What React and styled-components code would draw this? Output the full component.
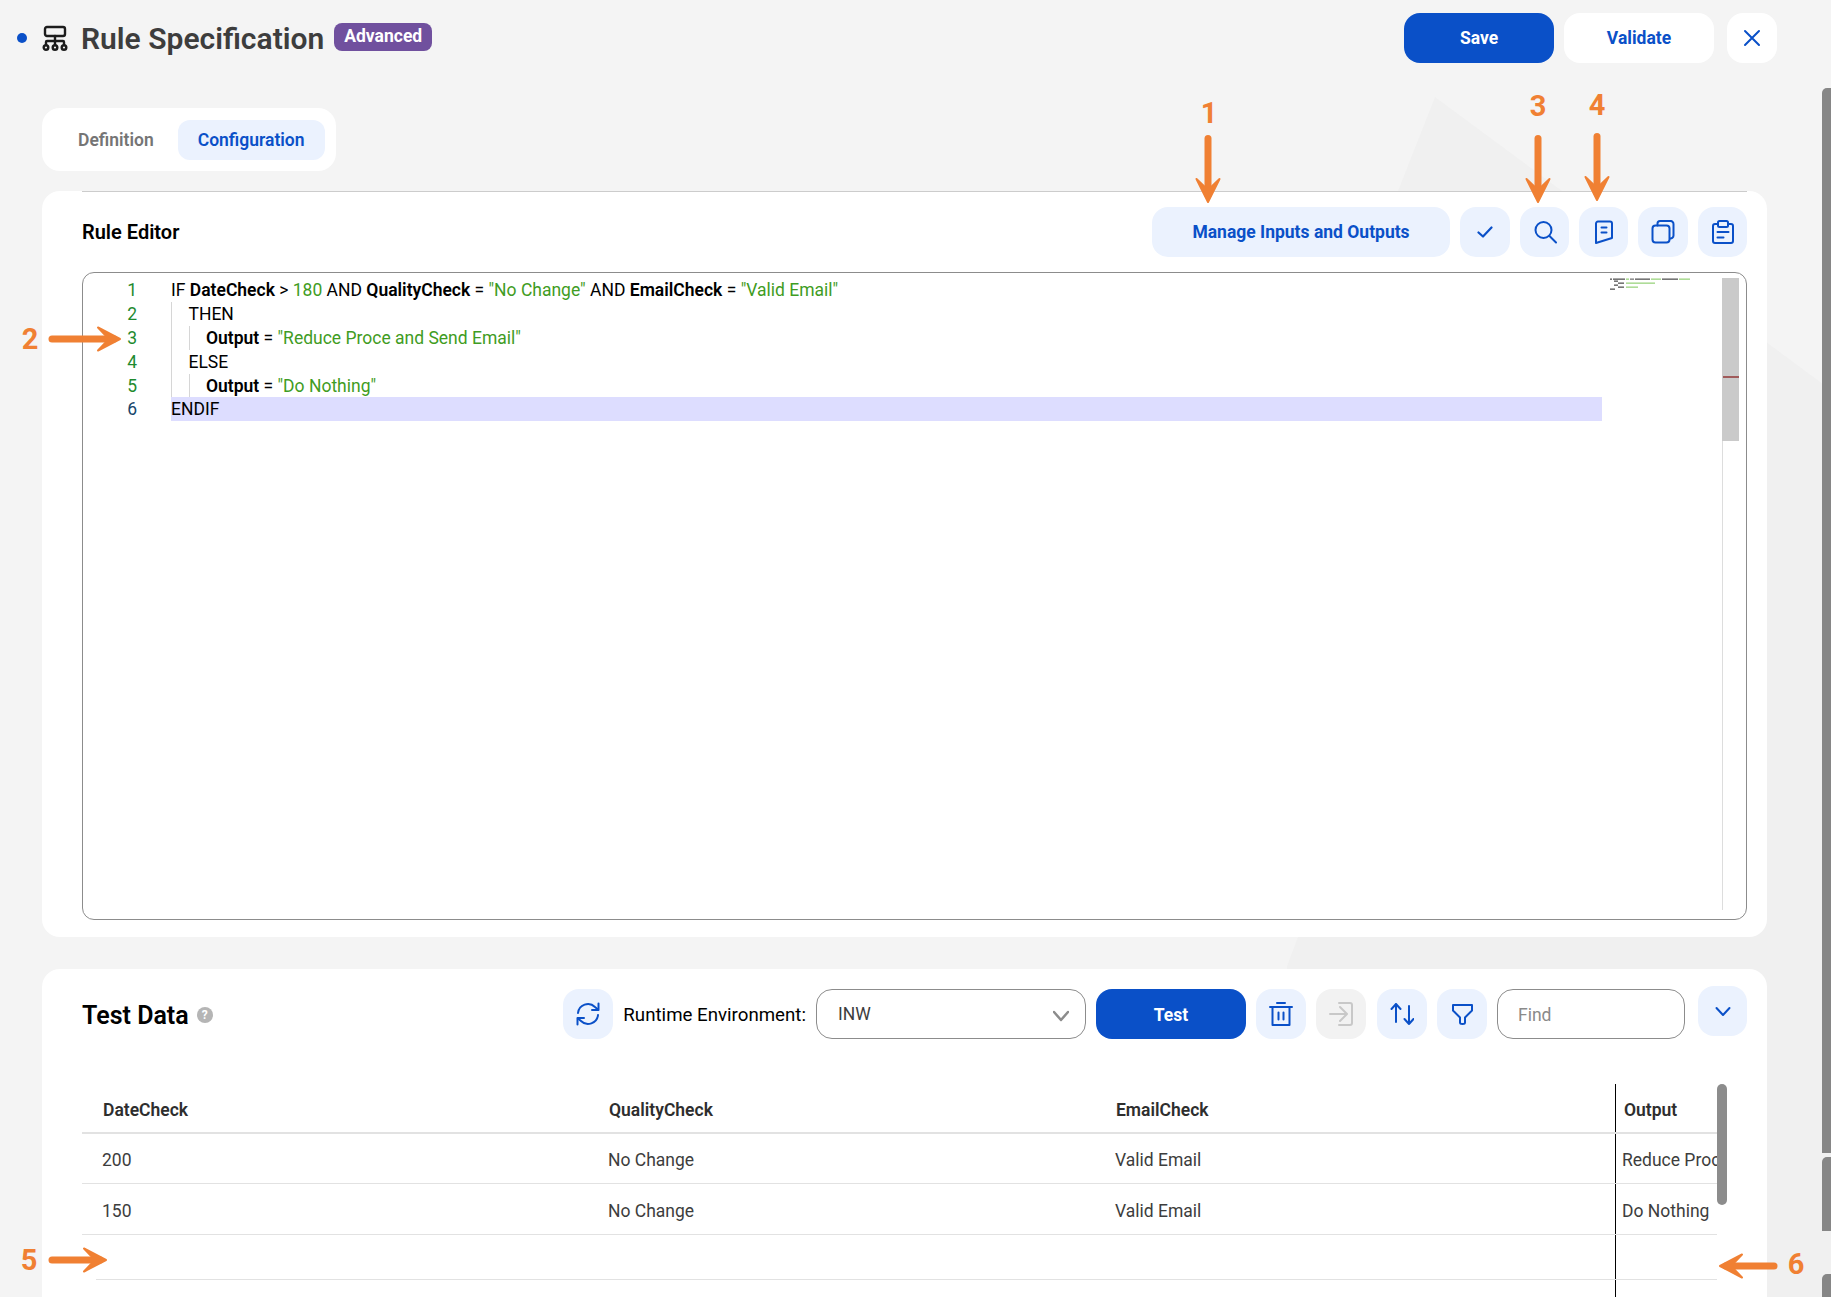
import React from 'react';
import styled, { createGlobalStyle } from 'styled-components';

const BLUE = '#0a50c8';
const PALE = '#ebf2fe';
const ORANGE = '#f08033';

const GlobalStyle = createGlobalStyle`
    html, body {
        margin: 0;
        height: 100%;
        overflow: hidden;
        background: #f4f4f4;
        font-family: Roboto, "Liberation Sans", sans-serif;
    }

    * {
        box-sizing: border-box;
    }
`;

const Page = styled.div`
    position: relative;
    width: 1831px;
    height: 1297px;
    overflow: hidden;
    background: #f4f4f4;
`;

const BackShape = styled.div`
    position: absolute;
    inset: 0;
    background: #f0f0f0;
    clip-path: polygon(1435px 97px, 1831px 390px, 1831px 1297px, 1287px 1297px, 1287px 966px, 1298px 937px, 1398px 191px);
`;

const Content = styled.div`
    position: relative;
`;

const Header = styled.header`
    display: flex;
    align-items: flex-start;
    justify-content: space-between;
    padding: 13px 54px 0 17px;
    height: 63px;
`;

const TitleGroup = styled.div`
    display: flex;
    align-items: center;
    height: 50px;
`;

const Dot = styled.span`
    width: 10px;
    height: 10px;
    border-radius: 50%;
    background: ${BLUE};
    margin-right: 15px;
`;

const HeadIcon = styled.svg`
    flex: none;
    width: 26px;
    height: 26px;
    fill: none;
    stroke: #1c1c1c;
    stroke-width: 2.4;
    stroke-linecap: round;
    stroke-linejoin: round;
`;

const Title = styled.h1`
    margin: 0 10px 0 13px;
    padding-top: 1px;
    font-size: 30px;
    font-weight: 600;
    color: #3d3d3d;
`;

const Badge = styled.span`
    margin-top: -2px;
    padding: 0 10px;
    height: 28px;
    line-height: 27px;
    border-radius: 8px;
    background: #70509e;
    color: #fff;
    font-size: 17.5px;
    font-weight: 700;
`;

const Actions = styled.div`
    display: flex;
    gap: 10px;

    button {
        padding-bottom: 1px;
    }
`;

const Button = styled.button`
    display: flex;
    align-items: center;
    justify-content: center;
    flex: none;
    width: ${p => p.$w || 50}px;
    height: 50px;
    padding: ${p => (p.$primary ? '1px 0 0' : '0')};
    border: none;
    border-radius: 16px;
    background: ${p => (p.$primary ? BLUE : p.$white ? '#fff' : p.$off ? '#f2f2f2' : PALE)};
    color: ${p => (p.$primary ? '#fff' : p.$off ? '#c8c8c8' : BLUE)};
    font-family: inherit;
    font-size: 17.5px;
    font-weight: 700;
    margin-left: ${p => p.$ml || 0}px;
    margin-top: ${p => p.$mt || 0}px;
`;

const Tabs = styled.nav`
    display: flex;
    align-items: center;
    width: 294px;
    height: 63px;
    margin: 45px 0 20px 42px;
    padding-left: 23px;
    border-radius: 18px;
    background: #fff;
`;

const Tab = styled.span`
    display: flex;
    align-items: center;
    justify-content: center;
    height: 40px;
    padding: 0 ${p => (p.$active ? 20 : 13)}px;
    border-radius: 12px;
    margin-right: ${p => (p.$active ? 0 : 11)}px;
    background: ${p => (p.$active ? PALE : 'transparent')};
    color: ${p => (p.$active ? BLUE : '#757575')};
    font-size: 17.5px;
    font-weight: 600;
`;

const Card = styled.section`
    margin: 0 64px 32px 42px;
    padding: 0 20px 17px 40px;
    border-radius: 18px;
    background: #fff;
`;

const EditorBar = styled.div`
    display: flex;
    align-items: center;
    gap: 10px;
    height: 81px;
    padding-bottom: 1px;
    border-top: 1px solid #cccccc;
`;

const CardTitle = styled.h2`
    margin: 0 auto 0 0;
    font-size: 20px;
    font-weight: 600;
    color: #000;
`;

const Editor = styled.div`
    position: relative;
    height: 648px;
    padding: 5px 0 0 0;
    border: 1px solid #8c8c8c;
    border-radius: 12px;
`;

const CodeLine = styled.div`
    display: flex;
    height: 23.9px;
    line-height: 25.5px;
    font-size: 17.5px;
`;

const LineNo = styled.span`
    flex: 0 0 88px;
    padding-right: 34px;
    text-align: right;
    color: ${p => (p.$current ? '#17456b' : '#1e8a2e')};
`;

const Code = styled.span`
    display: flex;
    width: 1431px;
    white-space: pre;
    color: #000;
    background: ${p => (p.$current ? '#ddddff' : 'transparent')};
`;

const Guide = styled.span`
    flex: 0 0 17.5px;
    border-left: 1px solid #d6d6d6;
`;

const Token = styled.span`
    font-weight: ${p => (p.$t === 'id' ? 600 : 400)};
    color: ${p => (p.$t === 'str' ? '#3f9c23' : '#000')};
`;

const Minimap = styled.svg`
    position: absolute;
    left: 1527px;
    top: 5px;
    width: 81px;
    height: 14px;
`;

const EditorTrack = styled.div`
    position: absolute;
    top: 5px;
    left: 1639px;
    width: 17px;
    height: 632px;
    border-left: 1px solid #dddddd;
`;

const EditorThumb = styled.div`
    width: 17px;
    height: 163px;
    margin-left: -1px;
    padding-top: 98px;
    background: #cacaca;
`;

const EditorMark = styled.div`
    height: 2px;
    margin-left: 1px;
    background: #a05a5a;
`;

const TestBar = styled.div`
    display: flex;
    align-items: flex-start;
    gap: 10px;
    padding-top: 20px;
    height: 115px;
`;

const TestTitle = styled.div`
    display: flex;
    align-items: center;
    gap: 8px;
    height: 52px;
    margin-right: auto;
    font-size: 25px;
    font-weight: 600;
    color: #000;
`;

const Help = styled.span`
    display: flex;
    align-items: center;
    justify-content: center;
    width: 16px;
    height: 16px;
    border-radius: 50%;
    background: #b5b5b5;
    color: #fff;
    font-size: 12px;
    font-weight: 700;
`;

const Label = styled.span`
    height: 50px;
    line-height: 52px;
    font-size: 18.7px;
    color: #000;
`;

const Field = styled.div`
    display: flex;
    align-items: center;
    justify-content: space-between;
    flex: none;
    width: ${p => p.$w}px;
    height: 50px;
    padding: ${p => (p.$hint ? '1px 16px 0 20px' : '0 16px 0 21px')};
    border: 1px solid #8c8c8c;
    border-radius: 16px;
    background: #fff;
    font-size: 17.5px;
    color: ${p => (p.$hint ? '#8a8a8a' : '#3d3d3d')};
`;

const TableArea = styled.div`
    position: relative;
    height: 213px;
`;

const TableClip = styled.div`
    width: 1635px;
    height: 213px;
    overflow: hidden;
`;

const Row = styled.div`
    display: grid;
    grid-template-columns: ${p => (p.$inset ? 492 : 506)}px 507px 520px 1fr;
    height: ${p => p.$h}px;
    margin-left: ${p => (p.$inset ? 14 : 0)}px;
    border-bottom: ${p => (p.$last ? 'none' : `${p.$head ? 2 : 1.5}px solid #e2e2e2`)};
    font-size: 17.5px;
    font-weight: ${p => (p.$head ? 600 : 400)};
    color: ${p => (p.$head ? '#2e2e2e' : '#3d3d3d')};
`;

const Cell = styled.div`
    display: flex;
    align-items: center;
    padding-left: ${p => (p.$head ? 21 : 20)}px;
    padding-top: 3px;
    white-space: nowrap;
    overflow: hidden;
`;

const OutputCell = styled(Cell)`
    padding-left: ${p => (p.$head ? 8 : 6)}px;
    border-left: 1px solid #000;
`;

const TableThumb = styled.div`
    position: absolute;
    left: 1635px;
    top: 0;
    width: 10px;
    height: 121px;
    border-radius: 5px;
    background: #8c8c8c;
`;

const PageBar = styled.div`
    position: absolute;
    left: 1822px;
    top: ${p => p.$top}px;
    width: 9px;
    height: ${p => p.$h}px;
    border-radius: 5px 0 0 0;
    background: #868686;
`;

const Callout = styled.span`
    position: absolute;
    left: ${p => p.$x}px;
    top: ${p => p.$y}px;
    width: 30px;
    text-align: center;
    line-height: 34px;
    font-size: 29px;
    font-weight: 700;
    color: ${ORANGE};
`;

const ArrowSvg = styled.svg`
    position: absolute;
    left: ${p => p.$x}px;
    top: ${p => p.$y}px;
    fill: none;
    stroke: ${ORANGE};
    stroke-width: 7;
    stroke-linecap: round;
`;

const Icon = styled.svg`
    width: ${p => p.$s || 24}px;
    height: ${p => p.$s || 24}px;
    margin-top: ${p => p.$mt || 0}px;
    fill: none;
    stroke: currentColor;
    stroke-width: ${p => p.$sw || 2};
    stroke-linecap: round;
    stroke-linejoin: round;
    flex: none;
`;

const ChevronIcon = styled(Icon)`
    color: #8c8c8c;
`;

// arrow pointing down from its top centre
const ArrowDown = ({ x, y }) => (
    <ArrowSvg $x={x - 14} $y={y} width="28" height="72" viewBox="0 0 28 72">
        <path d="M14 5.500V62" />
        <path d="M14 69L2.500 46L14 57L25.500 46Z" fill={ORANGE} strokeWidth="2" strokeLinejoin="round" />
    </ArrowSvg>
);

const ArrowRight = ({ x, y, w }) => (
    <ArrowSvg $x={x} $y={y - 14} width={w} height="28" viewBox={`0 0 ${w} 28`}>
        <path d={`M4 14H${w - 8}`} />
        <path d={`M${w - 2} 14L${w - 24} 2.500L${w - 13} 14L${w - 24} 25.500Z`} fill={ORANGE} strokeWidth="2" strokeLinejoin="round" />
    </ArrowSvg>
);

const ArrowLeft = ({ x, y, w }) => (
    <ArrowSvg $x={x} $y={y - 14} width={w} height="28" viewBox={`0 0 ${w} 28`}>
        <path d={`M8 14H${w - 4}`} />
        <path d="M2 14L24 2.500L13 14L24 25.500Z" fill={ORANGE} strokeWidth="2" strokeLinejoin="round" />
    </ArrowSvg>
);

const code = [
    { indent: 0, tokens: [['kw', 'IF '], ['id', 'DateCheck'], ['kw', ' > '], ['str', '180'], ['kw', ' AND '], ['id', 'QualityCheck'], ['kw', ' = '], ['str', '"No Change"'], ['kw', ' AND '], ['id', 'EmailCheck'], ['kw', ' = '], ['str', '"Valid Email"']] },
    { indent: 1, tokens: [['kw', 'THEN']] },
    { indent: 2, tokens: [['id', 'Output'], ['kw', ' = '], ['str', '"Reduce Proce and Send Email"']] },
    { indent: 1, tokens: [['kw', 'ELSE']] },
    { indent: 2, tokens: [['id', 'Output'], ['kw', ' = '], ['str', '"Do Nothing"']] },
    { indent: 0, tokens: [['kw', 'ENDIF']], current: true },
];

const miniBits = [
    [0, 0.5, 2, '#555'], [3, 0.5, 12, '#555'], [16, 0.5, 3, '#9bd47f'], [20, 0.5, 4, '#777'],
    [25, 0.5, 15, '#555'], [41, 0.5, 10, '#9bd47f'], [52, 0.5, 16, '#555'], [69, 0.5, 11, '#9bd47f'],
    [4, 2.5, 4, '#555'], [8, 4.5, 6, '#555'], [16, 4.5, 29, '#9bd47f'], [4, 6.5, 4, '#555'],
    [8, 8.5, 6, '#555'], [16, 8.5, 12, '#9bd47f'], [0, 10.5, 5, '#555'],
];

const rows = [
    { cells: ['200', 'No Change', 'Valid Email', 'Reduce Proce and Send Email'], h: 50 },
    { cells: ['150', 'No Change', 'Valid Email', 'Do Nothing'], h: 51 },
];

export default function App() {
    return (
        <Page>
            <GlobalStyle />
            <BackShape />
            <Content>
                <Header>
                    <TitleGroup>
                        <Dot />
                        <HeadIcon viewBox="0 0 26 26">
                            <rect x="3" y="2" width="20" height="9" rx="2" />
                            <path d="M13 11v9M4 20v-3a1 1 0 0 1 1-1h16a1 1 0 0 1 1 1v3" />
                            <circle cx="4" cy="22.500" r="2.300" />
                            <circle cx="13" cy="22.500" r="2.300" />
                            <circle cx="22" cy="22.500" r="2.300" />
                        </HeadIcon>
                        <Title>Rule Specification</Title>
                        <Badge>Advanced</Badge>
                    </TitleGroup>
                    <Actions>
                        <Button $primary $w={150}>Save</Button>
                        <Button $white $w={150}>Validate</Button>
                        <Button $white $ml={3}>
                            <Icon $s={18} viewBox="0 0 18 18"><path d="M2 2l14 14M16 2L2 16" /></Icon>
                        </Button>
                    </Actions>
                </Header>

                <Tabs>
                    <Tab>Definition</Tab>
                    <Tab $active>Configuration</Tab>
                </Tabs>

                <Card>
                    <EditorBar>
                        <CardTitle>Rule Editor</CardTitle>
                        <Button $w={298}>Manage Inputs and Outputs</Button>
                        <Button>
                            <Icon $s={16} $sw={2.200} viewBox="0 0 16 16"><path d="M1.500 8.500L6 12.500L14.500 3.500" /></Icon>
                        </Button>
                        <Button $w={49}>
                            <Icon viewBox="0 0 24 24"><circle cx="10.500" cy="10" r="8" /><path d="M16.500 16L23 22.500" /></Icon>
                        </Button>
                        <Button $w={49}>
                            <Icon viewBox="0 0 24 24">
                                <path d="M4 3.500a2 2 0 0 1 2-2h12a2 2 0 0 1 2 2V18L4 23z" />
                                <path d="M9.500 7.500h5M9.500 12.500h5" />
                            </Icon>
                        </Button>
                        <Button>
                            <Icon viewBox="0 0 24 24">
                                <rect x="1.500" y="5.500" width="17" height="17" rx="3" />
                                <path d="M6.500 5.500V3.500a2.500 2.500 0 0 1 2.500-2.500h10a3 3 0 0 1 3.500 3v11.500a3 3 0 0 1-3.500 3" />
                            </Icon>
                        </Button>
                        <Button $w={49}>
                            <Icon viewBox="0 0 24 24">
                                <path d="M7 4H4a2 2 0 0 0-2 2v15a2 2 0 0 0 2 2h16a2 2 0 0 0 2-2V6a2 2 0 0 0-2-2h-3" />
                                <rect x="7" y="1" width="10" height="6" rx="1.500" />
                                <path d="M6.500 12h11M6.500 17.500h6" />
                            </Icon>
                        </Button>
                    </EditorBar>
                    <Editor>
                        {code.map((line, i) => (
                            <CodeLine key={i}>
                                <LineNo $current={line.current}>{i + 1}</LineNo>
                                <Code $current={line.current}>
                                    {Array.from({ length: line.indent }).map((_, g) => <Guide key={g} />)}
                                    {line.tokens.map(([t, text], k) => <Token key={k} $t={t}>{text}</Token>)}
                                </Code>
                            </CodeLine>
                        ))}
                        <Minimap viewBox="0 0 81 14">
                            {miniBits.map(([x, y, w, fill], i) => (
                                <rect key={i} x={x} y={y} width={w} height="1.300" fill={fill} />
                            ))}
                        </Minimap>
                        <EditorTrack>
                            <EditorThumb><EditorMark /></EditorThumb>
                        </EditorTrack>
                    </Editor>
                </Card>

                <Card>
                    <TestBar>
                        <TestTitle>Test Data <Help>?</Help></TestTitle>
                        <Button>
                            <Icon viewBox="0 0 24 24">
                                <path d="M2 11A10 10 0 0 1 19 5l3 2.500" />
                                <path d="M22.500 1.500v6.500h-6.500" />
                                <path d="M22 13A10 10 0 0 1 5 19l-3-2.500" />
                                <path d="M1.500 22.500v-6.500h6.500" />
                            </Icon>
                        </Button>
                        <Label>Runtime Environment:</Label>
                        <Field $w={270}>
                            INW
                            <ChevronIcon $s={16} $sw={2.500} $mt={4} viewBox="0 0 16 16"><path d="M1 4l7 8 7-8" /></ChevronIcon>
                        </Field>
                        <Button $primary $w={150}>Test</Button>
                        <Button>
                            <Icon viewBox="0 0 24 24">
                                <path d="M1 5h22M8 1h8" />
                                <path d="M3.500 5v18h17V5M9.500 10.500v7M14.500 10.500v7" />
                            </Icon>
                        </Button>
                        <Button $off>
                            <Icon viewBox="0 0 24 24">
                                <path d="M1 12h16M11 5l7 7-7 7" />
                                <path d="M10 1h11a2 2 0 0 1 2 2v18a2 2 0 0 1-2 2H10" />
                            </Icon>
                        </Button>
                        <Button $ml={1}>
                            <Icon viewBox="0 0 24 24">
                                <path d="M6 20V2M1.500 7l4.500-5 4.500 5" />
                                <path d="M19 4v18M14.500 17l4.500 5 4.500-5" />
                            </Icon>
                        </Button>
                        <Button>
                            <Icon viewBox="0 0 24 24">
                                <path d="M3 3H22V8.500L15 15.500V20.500Q15 22 12.500 22Q10 22 10 20.500V15.500L3 8.500Z" />
                            </Icon>
                        </Button>
                        <Field $w={188} $hint>Find</Field>
                        <Button $w={49} $ml={3} $mt={-3}>
                            <Icon $s={16} viewBox="0 0 16 16"><path d="M1.500 5l6.500 7 6.500-7" /></Icon>
                        </Button>
                    </TestBar>
                    <TableArea>
                        <TableClip>
                            <Row $head $h={50}>
                                <Cell $head>DateCheck</Cell>
                                <Cell $head>QualityCheck</Cell>
                                <Cell $head>EmailCheck</Cell>
                                <OutputCell $head>Output</OutputCell>
                            </Row>
                            {rows.map(r => (
                                <Row key={r.cells[0]} $h={r.h}>
                                    <Cell>{r.cells[0]}</Cell>
                                    <Cell>{r.cells[1]}</Cell>
                                    <Cell>{r.cells[2]}</Cell>
                                    <OutputCell>{r.cells[3]}</OutputCell>
                                </Row>
                            ))}
                            <Row $inset $h={45}>
                                <Cell /><Cell /><Cell /><OutputCell />
                            </Row>
                            <Row $last $h={30}>
                                <Cell /><Cell /><Cell /><OutputCell />
                            </Row>
                        </TableClip>
                        <TableThumb />
                    </TableArea>
                </Card>
            </Content>

            <PageBar $top={88} $h={1065} />
            <PageBar $top={1157} $h={74} />
            <PageBar $top={1274} $h={23} />

            <Callout $x={1194} $y={96}>1</Callout>
            <ArrowDown x={1208} y={133} />
            <Callout $x={1523} $y={89}>3</Callout>
            <ArrowDown x={1538} y={133} />
            <Callout $x={1582} $y={88}>4</Callout>
            <ArrowDown x={1597} y={131} />
            <Callout $x={15} $y={322}>2</Callout>
            <ArrowRight x={48} y={339} w={74} />
            <Callout $x={14} $y={1243}>5</Callout>
            <ArrowRight x={48} y={1260} w={60} />
            <ArrowLeft x={1718} y={1266} w={60} />
            <Callout $x={1781} $y={1247}>6</Callout>
        </Page>
    );
}
